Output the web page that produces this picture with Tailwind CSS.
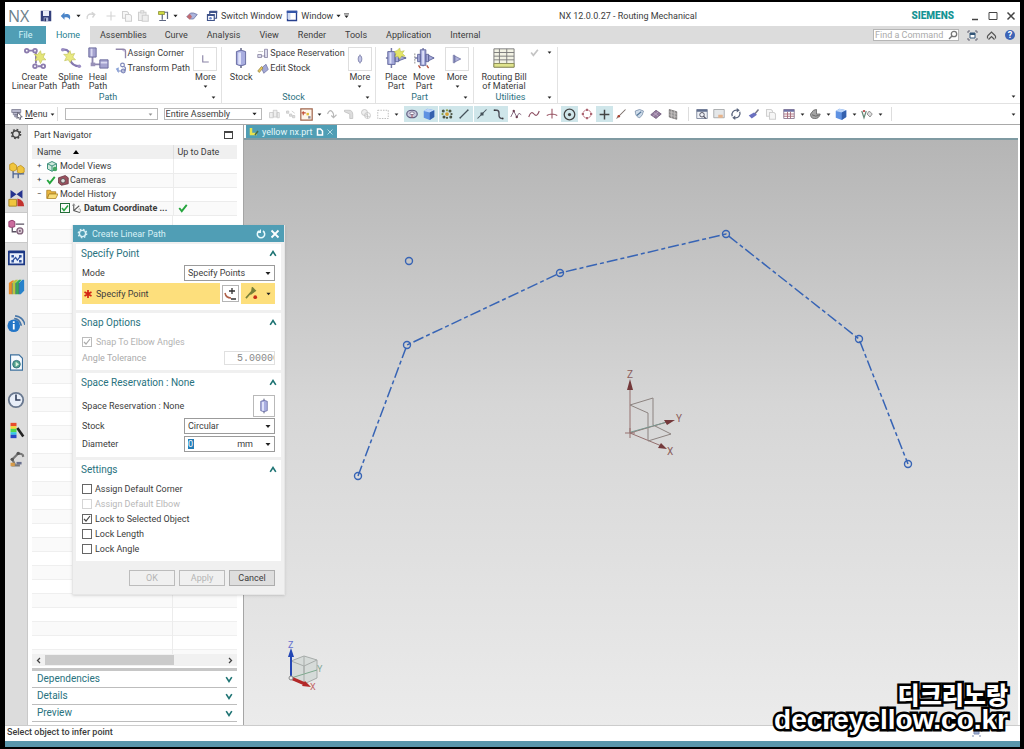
<!DOCTYPE html>
<html lang="en">
<head>
<meta charset="utf-8">
<title>NX 12.0.0.27 - Routing Mechanical</title>
<script src="https://cdn.jsdelivr.net/npm/@tailwindcss/browser@4"></script>
</head>
<body class="bg-black font-[Roboto,'Noto_Sans',sans-serif] text-[9px] leading-[12px] text-[#3c3c3c]">
<svg class="hidden" aria-hidden="true">
  <symbol id="caret" viewBox="0 0 6 4"><path d="M0.5 0.5h5L3 3.5z" fill="#222"/></symbol>
  <symbol id="up" viewBox="0 0 10 8"><path d="M1.5 7 5 1.5 8.5 7" fill="none" stroke="#1f7474" stroke-width="2"/></symbol>
  <symbol id="down" viewBox="0 0 10 8"><path d="M1.5 1 5 6.500 8.500 1" fill="none" stroke="#1f7474" stroke-width="2"/></symbol>
  <symbol id="gear" viewBox="0 0 16 16"><g fill="none" stroke="currentColor"><circle cx="8" cy="8" r="4.500" stroke-width="2"/><circle cx="8" cy="8" r="6" stroke-width="2.200" stroke-dasharray="2.300 2.410"/></g></symbol>
  <symbol id="save" viewBox="0 0 16 16"><path d="M1 1h14v14H1z" fill="#34407c"/><path d="M4 1h8v7H4z" fill="#e9edf8"/><path d="M5 10h6v5H5z" fill="#aeb8da"/><path d="M6 11h2v4H6z" fill="#28315f"/></symbol>
  <symbol id="undo" viewBox="0 0 16 16"><path d="M1 8l5-5v3c6-2 9 1 7 7-1-3-3-4-7-3v3z" fill="#4b85c8"/></symbol>
  <symbol id="redo" viewBox="0 0 16 16"><path d="M3 12C2 7 5 4 12 6M9 3l4 3-3 4" fill="none" stroke="#d4d4d4" stroke-width="1.800"/></symbol>
  <symbol id="plusg" viewBox="0 0 16 16"><path d="M8 2v12M2 8h12" stroke="#d4d4d4" stroke-width="1.500"/></symbol>
  <symbol id="copyg" viewBox="0 0 16 16"><g fill="#f6f6f6" stroke="#cfcfcf" stroke-width="1.400"><path d="M2 2h6l2 2v7H2z"/><path d="M6 6h6l2 2v7H6z"/></g></symbol>
  <symbol id="pasteg" viewBox="0 0 16 16"><g fill="#eee" stroke="#cfcfcf" stroke-width="1.400"><path d="M2 3h10v11H2z"/><path d="M5 1h4v3H5zM7 7h8v8H7z"/></g></symbol>
  <symbol id="cmd" viewBox="0 0 16 16"><path d="M2 2h8v4H2z" fill="#ccd840" stroke="#888c30"/><path d="M7 6v7M3 14h9M10 3h4v9" fill="none" stroke="#5c6680" stroke-width="1.600"/></symbol>
  <symbol id="eraser" viewBox="0 0 16 16"><path d="M1 9l5-5h4l5 2-5 6H6z" fill="#aab4dc" stroke="#656fa0"/><path d="M1 9l4-4 3 4-3 4z" fill="#c06c72"/></symbol>
  <symbol id="switch" viewBox="0 0 16 16"><g fill="#fff" stroke="#40548a" stroke-width="1.600"><path d="M5 2h9v9H5z"/><path d="M2 6h9v8H2z"/></g><path d="M5 1h10v3H5zM2 6h9v2H2z" fill="#40548a"/><circle cx="6" cy="11" r="1.800" fill="#6a86c9"/></symbol>
  <symbol id="win" viewBox="0 0 16 16"><path d="M2 2h12v12H2z" fill="#fff" stroke="#263f8e" stroke-width="1.800"/><path d="M1 1h14v3H1z" fill="#3456a8"/><path d="M2 4h4v8H2z" fill="#cfdcf5"/></symbol>

  <symbol id="linpath" viewBox="0 0 24 24"><g fill="none" stroke="#8c7cae" stroke-width="2"><path d="M5 4h6M13 6v12M15 21h4"/><circle cx="3" cy="4" r="2"/><circle cx="12" cy="4" r="2"/><circle cx="12" cy="21" r="2"/><circle cx="21" cy="21" r="2"/></g><path d="m18 4 1 4 4-1-2 4 3 3-4 0-2 4-2-4-4 1 2-4-3-3 4 0z" fill="#e4e578" stroke="#b9bb4e" stroke-width=".6"/></symbol>
  <symbol id="spline" viewBox="0 0 24 24"><path d="M3 3c8-1 7 5 8 10s5 8 11 8" fill="none" stroke="#8478b0" stroke-width="2.400"/><circle cx="3" cy="3" r="2" fill="#9c8fc5"/><circle cx="21" cy="21" r="2" fill="#9c8fc5"/><path d="m11 4 1 4 4-1-2 4 3 3-4 0-2 3-2-3-4 1 2-4-3-3 4 0z" fill="#e9e981" stroke="#b9bb4e" stroke-width=".6"/></symbol>
  <symbol id="heal" viewBox="0 0 24 24"><path d="M6 10v9h9" fill="none" stroke="#8f88b0" stroke-width="2"/><path d="M2 1h8v10H2z" fill="#a5a3d0" stroke="#68679a"/><path d="M14 14h9v9h-9z" fill="#a5a3d0" stroke="#68679a"/><path d="M4 2h2v8H4zM15 16h7v2h-7z" fill="#d9d8f0"/><path d="M4 17h5v4H4z" fill="#9891b8"/></symbol>
  <symbol id="acorner" viewBox="0 0 16 16"><path d="M1 3h10q3 0 3 3v9" fill="none" stroke="#9085aa" stroke-width="1.800"/><path d="M9 4h4v3z" fill="#c3b9db"/></symbol>
  <symbol id="tpath" viewBox="0 0 16 16"><g fill="none" stroke="#7f88bb" stroke-width="1.600"><path d="M3 12h8a3 3 0 0 0 0-6H8"/><circle cx="10" cy="4" r="2.500"/><circle cx="11" cy="12" r="2.500"/></g><path d="M1 9l4-2v8z" fill="#8aa3d8"/></symbol>
  <symbol id="ell" viewBox="0 0 16 16"><path d="M5 3v9h8" fill="none" stroke="#8a83a6" stroke-width="1.500"/></symbol>
  <symbol id="stock" viewBox="0 0 24 24"><path d="M12 1v22" stroke="#555a7a" stroke-width="1.500"/><path d="M7 5q5-3 10 0v14q-5 3-10 0z" fill="#a9aee0" stroke="#62679c"/><path d="M9 6h3v13H9z" fill="#dfe2fa"/></symbol>
  <symbol id="ovl" viewBox="0 0 16 16"><path d="M8 2v12" stroke="#666a90"/><ellipse cx="8" cy="8" rx="2.500" ry="4.500" fill="#c3c6e8" stroke="#70749f"/></symbol>
  <symbol id="space" viewBox="0 0 16 16"><path d="M1 10h5v4H1zM6 12h5M10 3h4v11h-4z" fill="#dcdcec" stroke="#807b9c"/><path d="M2 6h6" stroke="#999" stroke-dasharray="1.500 1"/></symbol>
  <symbol id="estock" viewBox="0 0 16 16"><path d="M6 8l6-5 3 7-6 5z" fill="#a3a8d4" stroke="#7377a5"/><path d="M1 12l5-6 2 2-5 6z" fill="#e7c75c" stroke="#94803d"/></symbol>
  <symbol id="place" viewBox="0 0 24 24"><path d="M7 1v22M1 12h22" stroke="#777ba8" stroke-width="1.600"/><path d="M3 5h8v14H3zM11 8h4v8h-4zM15 9l8 3-8 3z" fill="#a5a9da" stroke="#63689c"/><path d="M5 6h2v12H5z" fill="#dcdff7"/><path d="m16 1 1 4 4-1-2 3 3 3-4 0-2 3-2-3-3 1 1-4-2-2 3-1z" fill="#e4e566" stroke="#abb044" stroke-width=".5"/></symbol>
  <symbol id="move" viewBox="0 0 24 24"><path d="M11 1v20M2 12h21" stroke="#777ba8" stroke-width="1.600"/><path d="M8 3h6v17H8zM14 8h3v8h-3zM17 9l6 3-6 3zM5 8h3v8H5z" fill="#a5a9da" stroke="#63689c"/><path d="M10 4h2v15h-2z" fill="#dcdff7"/><path d="M2 7v12" stroke="#888" stroke-dasharray="2 1"/><path d="M6 20l2 3M15 20l2 3" stroke="#b4503c" stroke-width="1.500"/></symbol>
  <symbol id="cone" viewBox="0 0 16 16"><path d="M3 3h2v10H3zM5 4l8 4-8 4z" fill="#b0b3dc" stroke="#6c70a0"/></symbol>
  <symbol id="bom" viewBox="0 0 24 24"><path d="M1 2h22v20H1z" fill="#f2f2e4" stroke="#777"/><path d="M1 6h22M1 10h22M1 14h22M1 18h22M7 2v20M15 2v20" stroke="#777"/><path d="M1 18h22v4H1z" fill="#dfe38c" stroke="#8d8f55"/></symbol>
  <symbol id="chk" viewBox="0 0 16 16"><path d="M2 8l4 5 8-10" fill="none" stroke="currentColor" stroke-width="3"/></symbol>

  <symbol id="menu" viewBox="0 0 16 16"><path d="M1 2h12v4H1zM3 6h9v3H3zM5 9h5v3H5z" fill="#b8b8cc" stroke="#78788e"/><path d="M9 6l6 6-3 0 1 3-2 0-1-3-2 2z" fill="#fff" stroke="#445"/></symbol>
  <symbol id="g1" viewBox="0 0 16 16"><path d="M2 6h5v7H2zM7 3h5v9H7zM12 6h3v7h-3z" fill="#eee" stroke="#c6c6c6"/></symbol>
  <symbol id="g2" viewBox="0 0 16 16"><path d="M2 4h3v3H2zM6 8h3v3H6zM10 10h3v3h-3zM9 4l4 3" fill="#ddd" stroke="#c6c6c6"/></symbol>
  <symbol id="snapbox" viewBox="0 0 16 16"><path d="M1 1h14v14H1z" fill="#fff5ea" stroke="#a0664e" stroke-width="1.500"/><path d="M4 4v5M2 6h5" stroke="#c04830" stroke-width="1.300"/><path d="M8 6h3v3H8z" fill="#e4bf3a"/><path d="M10 10h3v3h-3z" fill="#8a8a9a"/></symbol>
  <symbol id="g3" viewBox="0 0 16 16"><path d="M2 8q4-9 8 0v4M7 10l3 3 4-4" fill="none" stroke="#b9b9b9" stroke-width="1.500"/></symbol>
  <symbol id="g4" viewBox="0 0 16 16"><path d="M2 3h6q5 0 5 6v5H9V8L2 5z" fill="#ddd" stroke="#bdbdbd"/></symbol>
  <symbol id="g5" viewBox="0 0 16 16"><circle cx="6" cy="6" r="4" fill="#eee" stroke="#bdbdbd"/><circle cx="10" cy="10" r="4" fill="none" stroke="#bdbdbd"/><path d="M10 8v6M7 11h6" stroke="#bbb"/></symbol>
  <symbol id="g6" viewBox="0 0 16 16"><path d="M1 3h14v11H1z" fill="none" stroke="#aaa" stroke-dasharray="2 1.500"/></symbol>
  <symbol id="torus" viewBox="0 0 16 16"><ellipse cx="8" cy="8" rx="7" ry="5" fill="#c9c9dc" stroke="#5f5c80" stroke-width="1.600"/><ellipse cx="8" cy="7" rx="3" ry="1.800" fill="#fff" stroke="#665a7c"/><path d="M8 9v4" stroke="#a33"/></symbol>
  <symbol id="cube" viewBox="0 0 16 16"><path d="M1 4l5-3 9 2v9l-6 4-8-3z" fill="#5f92e2"/><path d="M1 4l5-3 9 2-6 3z" fill="#bcd6fa"/><path d="M9 6l6-3v9l-6 4z" fill="#3461ae"/></symbol>
  <symbol id="pts" viewBox="0 0 16 16"><g fill="#4b5445"><circle cx="3" cy="4" r="2"/><circle cx="12" cy="4" r="2"/><circle cx="4" cy="12" r="2"/><circle cx="13" cy="12" r="2"/><circle cx="8" cy="8" r="2.500" fill="#d4a030"/><circle cx="2" cy="8" r="1.500" fill="#8b9a42"/><circle cx="14" cy="8" r="1.500"/><circle cx="8" cy="3" r="1.500" fill="#8b9a42"/><circle cx="8" cy="13" r="1.500"/></g></symbol>
  <symbol id="line" viewBox="0 0 16 16"><path d="M3 13 13 3" stroke="#45525a" stroke-width="1.600"/><path d="M2 12h2v2H2zM12 2h2v2h-2z" fill="#45525a"/></symbol>
  <symbol id="linem" viewBox="0 0 16 16"><path d="M2 14 14 2" stroke="#45525a" stroke-width="1.400"/><path d="M6 6h4v4H6z" fill="#45525a"/></symbol>
  <symbol id="ess" viewBox="0 0 16 16"><path d="M2 3h3q3 0 3 4v3q0 4 5 4" fill="none" stroke="#4a4a55" stroke-width="1.800"/><path d="M1 2h2v2H1zM12 13h2v2h-2z" fill="#333"/></symbol>
  <symbol id="zig" viewBox="0 0 16 16"><path d="M1 12 5 4l4 8 3-5 3 2" fill="none" stroke="#8a6f86" stroke-width="1.300"/><g fill="#6d3f55"><circle cx="5" cy="4" r="1.600"/><circle cx="9" cy="12" r="1.600"/></g></symbol>
  <symbol id="wave" viewBox="0 0 16 16"><path d="M1 12q3-9 7-4t7-4" fill="none" stroke="#8c4d60" stroke-width="1.500"/></symbol>
  <symbol id="cross" viewBox="0 0 16 16"><path d="M8 1v13M1 10q7-4 14 0" fill="none" stroke="#96505f" stroke-width="1.400"/></symbol>
  <symbol id="target" viewBox="0 0 16 16"><circle cx="8" cy="8" r="6.500" fill="none" stroke="#444" stroke-width="1.600"/><circle cx="8" cy="8" r="2" fill="#444"/></symbol>
  <symbol id="quad" viewBox="0 0 16 16"><circle cx="8" cy="8" r="5.500" fill="none" stroke="#bd7884" stroke-width="1.200"/><path d="M7 1h2v3H7zM7 12h2v3H7zM1 7h3v2H1zM12 7h3v2h-3z" fill="#9a4a58"/></symbol>
  <symbol id="plus" viewBox="0 0 16 16"><path d="M8 2v12M2 8h12" stroke="#444" stroke-width="1.800"/></symbol>
  <symbol id="slash" viewBox="0 0 16 16"><path d="M2 14 14 2" stroke="#776b66" stroke-width="1.400"/><circle cx="5" cy="11" r="1.700" fill="#a43"/></symbol>
  <symbol id="face" viewBox="0 0 16 16"><path d="M3 4q6-4 11 0-1 6-5 9-6-1-6-9z" fill="#cfdcea" stroke="#7389a6"/><path d="M5 10l6-5" stroke="#579" stroke-width="1.500"/></symbol>
  <symbol id="dia" viewBox="0 0 16 16"><path d="M1 9l7-6 7 5-7 6z" fill="#927a9c" stroke="#675273"/><path d="M5 6l6 5M11 5l-7 6" stroke="#c9b5cf"/></symbol>
  <symbol id="mesh" viewBox="0 0 16 16"><path d="M3 2l10 3v10L3 12z" fill="#999" stroke="#6b6767"/><path d="M3 5l10 3M3 9l10 3M6 3v10M10 4v10" stroke="#c3bebe"/></symbol>
  <symbol id="fit" viewBox="0 0 16 16"><path d="M1 2h14v12H1z" fill="#eef1f6" stroke="#667089"/><path d="M1 2h14v3H1z" fill="#606e8e"/><circle cx="8" cy="9" r="3" fill="none" stroke="#556" stroke-width="1.300"/><path d="M10 11l3 3" stroke="#556" stroke-width="1.500"/></symbol>
  <symbol id="zoomw" viewBox="0 0 16 16"><path d="M1 2h14v11H1z" fill="#e4e7e9" stroke="#969a9c"/><path d="M7 9h6v4H7z" fill="#e6b38b"/></symbol>
  <symbol id="rot" viewBox="0 0 16 16"><path d="M3 11a6 6 0 0 1 7-8M13 5a6 6 0 0 1-7 8" fill="none" stroke="#59647c" stroke-width="1.700"/><path d="M9 0l4 3-4 3zM7 10l-4 3 4 3z" fill="#59647c"/></symbol>
  <symbol id="brush" viewBox="0 0 16 16"><path d="M9 8l5-6" stroke="#778" stroke-width="2"/><path d="M1 10l7-4 4 3-7 5z" fill="#6a70c0"/></symbol>
  <symbol id="tbl" viewBox="0 0 16 16"><path d="M1 2h14v12H1z" fill="#fff" stroke="#75607e"/><path d="M1 2h14v3H1z" fill="#6c70a4"/><path d="M1 8h14M1 11h14M6 5v9M10 5v9" stroke="#a66a78" stroke-width="1.200"/></symbol>
  <symbol id="shade" viewBox="0 0 16 16"><path d="M2 8q4-7 8-6v6h5q-2 7-8 6-5 0-5-6z" fill="#a4a4a4" stroke="#5c5c5c"/><path d="M4 9q5 3 9 1" fill="none" stroke="#555"/></symbol>
  <symbol id="vis" viewBox="0 0 16 16"><path d="M1 4l3 9 3-9" fill="none" stroke="#687" stroke-width="1.600"/><path d="M8 8l3-4 4 4-3 4z" fill="#ddd" stroke="#777"/><circle cx="4" cy="4" r="1.500" fill="#b44"/></symbol>

  <symbol id="assy" viewBox="0 0 20 20"><path d="M2 3l4-2 4 3v5l-4 2-4-2zM11 6l4-2 4 3v5l-4 2-4-2z" fill="#f0c53e" stroke="#c09320"/><path d="M6 11v8M6 14h13M12 14v5" fill="none" stroke="#49608e" stroke-width="1.500"/></symbol>
  <symbol id="cons" viewBox="0 0 20 20"><path d="M3 0v10l7-5zM17 0v10l-7-5z" fill="#25338f"/><path d="M1 11h9v8H1z" fill="#f0c53e" stroke="#a17e20"/><path d="M11 19v-9q8 2 8 9z" fill="#c3322e"/></symbol>
  <symbol id="pnav" viewBox="0 0 20 20"><path d="M1 3q4-3 7 0v6q-4 2-7 0z" fill="#cb6c9e" stroke="#8d3567"/><path d="M9 6h10M5 10v5h5" fill="none" stroke="#5a5262" stroke-width="1.500"/><circle cx="14" cy="14" r="3.500" fill="#d9c9d5" stroke="#80627a" stroke-width="1.500"/><circle cx="14" cy="14" r="1" fill="#60405a"/></symbol>
  <symbol id="reuse" viewBox="0 0 20 20"><path d="M1 3h18v15H1z" fill="#e8effa" stroke="#1b3784" stroke-width="2"/><path d="M1 2h18v3H1z" fill="#1b3784"/><path d="M4 7h3v3H4zM13 7h3v3h-3zM4 13h3v3H4zM13 13h3v3h-3z" fill="#2f519e"/><path d="M6 13l3-3 2 3 4-5" fill="none" stroke="#2f519e" stroke-width="1.500"/></symbol>
  <symbol id="books" viewBox="0 0 20 20"><path d="M1 6l4-3h3L5 6v13H1z" fill="#e88a28"/><path d="M5 6l4-4h3L9 6v13H5z" fill="#b3c940"/><path d="M9 6l4-4h3l-3 4v13H9z" fill="#34a95a"/><path d="M13 6l4-4h2v13l-4 4h-2z" fill="#2882ca"/><path d="M5 6v13M9 6v13M13 6v13" stroke="#557" stroke-width=".7"/></symbol>
  <symbol id="info" viewBox="0 0 20 20"><circle cx="7.500" cy="12" r="7" fill="#2476c7"/><path d="M6.500 10h2v6h-2zM6.500 7h2v2h-2z" fill="#fff"/><path d="M8 4q6 0 8 8M9 1q9 1 11 10" fill="none" stroke="#4776a8" stroke-width="1.800"/></symbol>
  <symbol id="html" viewBox="0 0 20 20"><path d="M3 1h10l4 4v14H3z" fill="#f7fbff" stroke="#3c6f9c" stroke-width="1.300"/><circle cx="10" cy="12" r="4.500" fill="#53a28e" stroke="#2a6876"/><path d="M9 9l4 3-4 3z" fill="#dff3df"/></symbol>
  <symbol id="clock" viewBox="0 0 20 20"><circle cx="10" cy="10" r="8" fill="#e8eef8" stroke="#69788f" stroke-width="2"/><path d="M10 4v6h5" fill="none" stroke="#33405c" stroke-width="1.800"/></symbol>
  <symbol id="rainbow" viewBox="0 0 20 20"><path d="M3 1h7v4H3z" fill="#e84b2c"/><path d="M3 5h7v3H3z" fill="#f5dd32"/><path d="M3 8h7v4H3z" fill="#4fd64f"/><path d="M3 12h7v3H3z" fill="#31c5e8"/><path d="M3 15h7v4H3z" fill="#2745c6"/><path d="M11 7l7 10" stroke="#222" stroke-width="3"/></symbol>
  <symbol id="robot" viewBox="0 0 20 20"><path d="M4 18h10M8 17l-3-6 7-7 5 1M17 5l1 3" fill="none" stroke="#777" stroke-width="2.600"/><circle cx="5" cy="11" r="2" fill="#555"/><circle cx="12" cy="4" r="2" fill="#555"/><path d="M3 15h5v4H3z" fill="#d69a48"/><path d="M10 14h6v3h-6z" fill="#69708e"/></symbol>

  <symbol id="views" viewBox="0 0 16 16"><path d="M2 5l6-3 6 3v7l-6 3-6-3z" fill="#cfe9dc" stroke="#3b8f79" stroke-width="1.300"/><path d="M2 5l6 3 6-3M8 8v7" fill="none" stroke="#3b8f79" stroke-width="1.300"/><circle cx="12" cy="12" r="3" fill="#45a865"/></symbol>
  <symbol id="cam" viewBox="0 0 16 16"><path d="M2 5l9-3 4 3v8l-9 2-4-3z" fill="#9b5260" stroke="#63323e"/><circle cx="8" cy="9" r="3" fill="#ddd" stroke="#444"/></symbol>
  <symbol id="folder" viewBox="0 0 16 16"><path d="M1 3h5l1 2h6v3H4l-2 6H1z" fill="#e9b640" stroke="#a77d20"/><path d="M4 8h12l-3 6H2z" fill="#f8dd78" stroke="#a77d20"/></symbol>
  <symbol id="csys" viewBox="0 0 16 16"><path d="M4 2v9l9 3M4 11l8-7" fill="none" stroke="#555" stroke-width="1.500"/><path d="M2 4l2-3 2 3M11 9q4-2 2 5" fill="none" stroke="#777"/></symbol>
</svg>

<div class="flex h-screen flex-col overflow-hidden border-t-2 border-r-4 border-b-2 border-l-[5px] border-black bg-white">
  <!-- Title bar -->
  <header class="grid h-6 shrink-0 grid-cols-[12fr_auto_7fr] items-center pt-1">
    <div class="flex items-center gap-2 pl-[3px] whitespace-nowrap">
      <span class="w-6 font-['Open_Sans',sans-serif] text-[16px] leading-4 text-[#6d818b]">NX</span>
      <button aria-label="Save"><svg class="size-3"><use href="#save"/></svg></button>
      <button aria-label="Undo" class="flex items-center gap-1"><svg class="size-3"><use href="#undo"/></svg><svg class="h-1 w-[5px]"><use href="#caret"/></svg></button>
      <button aria-label="Redo" class="-ml-1"><svg class="size-3"><use href="#redo"/></svg></button>
      <button aria-label="Cut"><svg class="size-3"><use href="#plusg"/></svg></button>
      <button aria-label="Copy" class="-ml-1"><svg class="size-3"><use href="#copyg"/></svg></button>
      <button aria-label="Paste" class="-ml-1"><svg class="size-3"><use href="#pasteg"/></svg></button>
      <button aria-label="Repeat command" class="flex items-center gap-1"><svg class="size-3"><use href="#cmd"/></svg><svg class="h-1 w-[5px]"><use href="#caret"/></svg></button>
      <button aria-label="Touch mode"><svg class="size-3"><use href="#eraser"/></svg></button>
      <button class="flex items-center gap-[3px]"><svg class="size-3"><use href="#switch"/></svg>Switch Window</button>
      <button class="-ml-1 flex items-center gap-[3px]"><svg class="size-3"><use href="#win"/></svg>Window <svg class="h-1 w-[5px]"><use href="#caret"/></svg><svg class="h-[6px] w-[5px]" viewBox="0 0 6 6"><path d="M0 .5h6" stroke="#222"/><path d="M.5 2.500h5L3 5.500z" fill="#222"/></svg></button>
    </div>
    <h1>NX 12.0.0.27 - Routing Mechanical</h1>
    <div class="flex items-center justify-end gap-2 pr-1">
      <span class="mr-2 text-[10px] font-black text-[#159494]">SIEMENS</span>
      <button aria-label="Minimize"><svg class="size-[10px]" viewBox="0 0 10 10"><path d="M2 8.500h6" stroke="#444" stroke-width="1.500"/></svg></button>
      <button aria-label="Maximize"><svg class="size-[10px]" viewBox="0 0 10 10"><path d="M1 1.500h8v7H1z" fill="none" stroke="#444"/></svg></button>
      <button aria-label="Close"><svg class="size-[10px]" viewBox="0 0 10 10"><path d="M1.500 1.500l7 7M8.500 1.500l-7 7" stroke="#444" stroke-width="1.500"/></svg></button>
    </div>
  </header>

  <!-- Ribbon tabs -->
  <nav class="flex h-[18px] shrink-0 items-stretch bg-[#dcdcdc]">
    <button class="w-[41px] bg-[#509eb5] text-[#d5f3f7]">File</button>
    <button class="w-11 bg-white text-[#25808f]">Home</button>
    <button class="ml-[10px]">Assemblies</button>
    <button class="ml-[18px]">Curve</button>
    <button class="ml-[19px]">Analysis</button>
    <button class="ml-[19px]">View</button>
    <button class="ml-[19px]">Render</button>
    <button class="ml-[19px]">Tools</button>
    <button class="ml-[19px]">Application</button>
    <button class="ml-[19px]">Internal</button>
    <div class="ml-auto flex items-center gap-2 pr-[5px]">
      <label class="flex h-3 w-[86px] items-center border border-[#b5b5b5] bg-white">
        <input aria-label="Find a Command" placeholder="Find a Command" class="w-full min-w-0 pl-px placeholder:text-[#aaa]">
        <svg class="size-[10px] shrink-0" viewBox="0 0 10 10"><circle cx="6" cy="4" r="2.700" fill="#fff" stroke="#777" stroke-width="1.300"/><path d="M4 6 1 9" stroke="#777" stroke-width="1.500"/></svg>
      </label>
      <button aria-label="Full screen"><svg class="size-[11px]" viewBox="0 0 11 11"><path d="M1 3V1h2M8 1h2v2M10 8v2H8M3 10H1V8" fill="none" stroke="#667"/><path d="M3 3h5v5H3z" fill="#fff" stroke="#357"/><path d="M3 3h5v2H3z" fill="#357"/></svg></button>
      <button aria-label="Minimize ribbon"><svg class="size-[11px]" viewBox="0 0 11 11"><path d="M1.500 6l4-4 4 4M2.500 9.500l3-3 3 3M1.500 6v2.500M9.500 6v2.500" fill="none" stroke="#555" stroke-width="1.200"/></svg></button>
      <button aria-label="Help" class="size-[10px] rounded-full bg-[#3c63b6] text-[9px] leading-[10px] font-bold text-white">?</button>
    </div>
  </nav>

  <!-- Ribbon -->
  <section class="flex h-[60px] shrink-0 border-b border-[#e2e2e2] text-center leading-[9px]">
    <div class="mt-[3px] flex w-[217px] flex-col border-r border-[#e2e2e2]">
      <div class="flex flex-1 items-start pl-2">
        <button class="flex w-[43px] flex-col items-center gap-1 whitespace-nowrap"><svg class="size-[22px]"><use href="#linpath"/></svg>Create<br>Linear Path</button>
        <button class="flex w-[30px] flex-col items-center gap-1"><svg class="size-[22px]"><use href="#spline"/></svg>Spline<br>Path</button>
        <button class="flex w-[26px] flex-col items-center gap-1"><svg class="size-[22px]"><use href="#heal"/></svg>Heal<br>Path</button>
        <div class="flex flex-1 flex-col gap-[3px] pl-1 whitespace-nowrap">
          <button class="flex items-center gap-px"><svg class="size-3"><use href="#acorner"/></svg>Assign Corner</button>
          <button class="flex items-center gap-px"><svg class="size-3"><use href="#tpath"/></svg>Transform Path</button>
        </div>
        <button class="flex w-8 flex-col items-center"><span class="mb-[2px] flex size-6 items-center justify-center border border-[#dedede]"><svg class="size-3"><use href="#ell"/></svg></span>More<svg class="mt-[3px] h-[3px] w-[5px]"><use href="#caret"/></svg></button>
      </div>
      <div class="flex h-3 items-center text-[#2d7180]"><span class="flex-1">Path</span><svg class="mr-[5px] h-[3px] w-[5px]"><use href="#caret"/></svg></div>
    </div>
    <div class="mt-[3px] flex w-[154px] flex-col border-r border-[#e2e2e2]">
      <div class="flex flex-1 items-start pl-1">
        <button class="flex w-8 flex-col items-center gap-1"><svg class="size-[22px]"><use href="#stock"/></svg>Stock</button>
        <div class="flex flex-1 flex-col gap-[3px] pl-px whitespace-nowrap">
          <button class="flex items-center gap-px"><svg class="size-3"><use href="#space"/></svg>Space Reservation</button>
          <button class="flex items-center gap-px"><svg class="size-3"><use href="#estock"/></svg>Edit Stock</button>
        </div>
        <button class="flex w-8 flex-col items-center"><span class="mb-[2px] flex size-6 items-center justify-center border border-[#dedede]"><svg class="size-3"><use href="#ovl"/></svg></span>More<svg class="mt-[3px] h-[3px] w-[5px]"><use href="#caret"/></svg></button>
      </div>
      <div class="flex h-3 items-center text-[#2d7180]"><span class="flex-1">Stock</span><svg class="mr-[5px] h-[3px] w-[5px]"><use href="#caret"/></svg></div>
    </div>
    <div class="mt-[3px] flex w-[98px] flex-col border-r border-[#e2e2e2]">
      <div class="flex flex-1 items-start pl-[6px]">
        <button class="flex w-7 flex-col items-center gap-1"><svg class="size-[22px]"><use href="#place"/></svg>Place<br>Part</button>
        <button class="flex w-7 flex-col items-center gap-1"><svg class="size-[22px]"><use href="#move"/></svg>Move<br>Part</button>
        <button class="ml-auto flex w-8 flex-col items-center"><span class="mb-[2px] flex size-6 items-center justify-center border border-[#dedede]"><svg class="size-3"><use href="#cone"/></svg></span>More<svg class="mt-[3px] h-[3px] w-[5px]"><use href="#caret"/></svg></button>
      </div>
      <div class="flex h-3 items-center text-[#2d7180]"><span class="flex-1">Part</span><svg class="mr-[5px] h-[3px] w-[5px]"><use href="#caret"/></svg></div>
    </div>
    <div class="mt-[3px] flex w-[84px] flex-col border-r border-[#e2e2e2]">
      <div class="flex flex-1 items-start pl-[5px]">
        <button class="flex w-[50px] flex-col items-center gap-1 whitespace-nowrap"><svg class="size-[22px]"><use href="#bom"/></svg>Routing Bill<br>of Material</button>
        <button aria-label="Check" class="flex items-center gap-2 pt-px pl-px text-[#c4c4c4]"><svg class="size-[9px]"><use href="#chk"/></svg><svg class="h-[3px] w-[5px]"><use href="#caret"/></svg></button>
      </div>
      <div class="flex h-3 items-center text-[#2d7180]"><span class="flex-1">Utilities</span><svg class="mr-[5px] h-[3px] w-[5px]"><use href="#caret"/></svg></div>
    </div>
    <svg class="mr-1 mb-[5px] ml-auto h-[3px] w-[5px] self-end"><use href="#caret"/></svg>
  </section>

  <!-- Selection bar -->
  <section class="flex h-[21px] shrink-0 items-center border-b border-[#a9a9a9]">
    <button class="ml-[6px] flex items-center gap-[2px]"><svg class="size-3"><use href="#menu"/></svg><span><u>M</u>enu</span><svg class="h-[3px] w-[5px]"><use href="#caret"/></svg></button>
    <span class="ml-[2px] h-[14px] w-2 border-l border-[#ddd]"></span>
    <div class="relative flex h-3 w-[93px] shrink-0 items-center border border-[#b9b9b9]">
      <select aria-label="Type filter" class="h-full w-full appearance-none"><option></option></select><svg class="absolute right-1 h-[3px] w-[5px] opacity-50"><use href="#caret"/></svg>
    </div>
    <div class="relative ml-[6px] flex h-3 w-[98px] shrink-0 items-center border border-[#b9b9b9]">
      <select aria-label="Selection scope" class="h-full w-full appearance-none pl-px leading-[10px]"><option>Entire Assembly</option></select><svg class="absolute right-1 h-1 w-[5px]"><use href="#caret"/></svg>
    </div>
    <div class="ml-1 flex items-center">
      <button aria-label="Filter" class="flex w-[17px] justify-center"><svg class="size-3"><use href="#g1"/></svg></button>
      <button aria-label="Reset" class="flex w-[17px] justify-center"><svg class="size-3"><use href="#g2"/></svg></button>
      <button aria-label="Snap menu" class="flex w-[22px] items-center justify-between"><svg class="size-[13px]"><use href="#snapbox"/></svg><svg class="h-[3px] w-[5px]"><use href="#caret"/></svg></button>
      <button aria-label="Chain" class="ml-[2px] flex w-[17px] justify-center"><svg class="size-3"><use href="#g3"/></svg></button>
      <button aria-label="Follow" class="flex w-[17px] justify-center"><svg class="size-3"><use href="#g4"/></svg></button>
      <button aria-label="Group" class="flex w-[17px] justify-center"><svg class="size-3"><use href="#g5"/></svg></button>
      <button aria-label="Rectangle select" class="ml-[2px] flex w-6 items-center justify-between pr-[2px]"><svg class="size-3"><use href="#g6"/></svg><svg class="h-[3px] w-[5px]"><use href="#caret"/></svg></button>
      <div class="ml-[3px] flex h-4 items-center bg-[#cfe6ea]">
        <button aria-label="Shaded" class="flex w-[17px] justify-center"><svg class="size-3"><use href="#torus"/></svg></button>
        <button aria-label="Solid" class="flex w-[17px] justify-center"><svg class="size-3"><use href="#cube"/></svg></button>
      </div>
      <div class="ml-px flex h-4 items-center bg-[#cfe6ea]">
        <button aria-label="Snap points" class="flex w-[17px] justify-center"><svg class="size-3"><use href="#pts"/></svg></button>
        <button aria-label="End point" class="flex w-[17px] justify-center"><svg class="size-3"><use href="#line"/></svg></button>
      </div>
      <div class="ml-px flex h-4 items-center bg-[#cfe6ea]">
        <button aria-label="Mid point" class="flex w-[17px] justify-center"><svg class="size-3"><use href="#linem"/></svg></button>
        <button aria-label="Control point" class="flex w-[17px] justify-center"><svg class="size-3"><use href="#ess"/></svg></button>
      </div>
      <div class="flex items-center">
        <button aria-label="Defining point" class="flex w-[17px] justify-center"><svg class="size-3"><use href="#zig"/></svg></button>
        <button aria-label="Pole" class="flex w-[18px] justify-center"><svg class="size-3"><use href="#wave"/></svg></button>
        <button aria-label="Intersection" class="flex w-[18px] justify-center"><svg class="size-3"><use href="#cross"/></svg></button>
        <button aria-label="Arc center" class="flex h-4 w-[17px] items-center justify-center bg-[#cfe6ea]"><svg class="size-[13px]"><use href="#target"/></svg></button>
        <button aria-label="Quadrant" class="flex w-[18px] justify-center"><svg class="size-3"><use href="#quad"/></svg></button>
        <button aria-label="Existing point" class="flex h-4 w-[17px] items-center justify-center bg-[#cfe6ea]"><svg class="size-[13px]"><use href="#plus"/></svg></button>
        <button aria-label="Point on curve" class="flex w-[17px] justify-center"><svg class="size-3"><use href="#slash"/></svg></button>
        <button aria-label="Point on face" class="flex w-[18px] justify-center"><svg class="size-3"><use href="#face"/></svg></button>
        <button aria-label="Facet" class="flex w-[17px] justify-center"><svg class="size-3"><use href="#dia"/></svg></button>
        <button aria-label="Grid" class="flex w-[17px] justify-center"><svg class="size-3"><use href="#mesh"/></svg></button>
      </div>
      <span class="mr-1 ml-[6px] h-[14px] border-l border-[#ddd]"></span>
      <button aria-label="Fit" class="flex w-[18px] justify-center"><svg class="size-3"><use href="#fit"/></svg></button>
      <button aria-label="Zoom" class="flex w-[17px] justify-center"><svg class="size-3"><use href="#zoomw"/></svg></button>
      <button aria-label="Rotate" class="flex w-[17px] justify-center"><svg class="size-3"><use href="#rot"/></svg></button>
      <button aria-label="Style" class="flex w-[18px] justify-center"><svg class="size-3"><use href="#brush"/></svg></button>
      <button aria-label="Copy display" class="flex w-[17px] justify-center"><svg class="size-3"><use href="#copyg"/></svg></button>
      <button aria-label="Layers" class="ml-[3px] flex w-[26px] items-center justify-between pr-1"><svg class="size-3"><use href="#tbl"/></svg><svg class="h-[3px] w-[5px]"><use href="#caret"/></svg></button>
      <button aria-label="Rendering" class="flex w-[26px] items-center justify-between pr-1"><svg class="size-3"><use href="#shade"/></svg><svg class="h-[3px] w-[5px]"><use href="#caret"/></svg></button>
      <button aria-label="Orientation" class="flex w-[26px] items-center justify-between pr-1"><svg class="size-3"><use href="#cube"/></svg><svg class="h-[3px] w-[5px]"><use href="#caret"/></svg></button>
      <button aria-label="Visibility" class="flex w-[26px] items-center justify-between pr-1"><svg class="size-3"><use href="#vis"/></svg><svg class="h-[3px] w-[5px]"><use href="#caret"/></svg></button>
      <span class="ml-1 h-[14px] border-l border-[#ddd]"></span>
    </div>
    <svg class="mr-1 ml-auto h-[3px] w-[5px]"><use href="#caret"/></svg>
  </section>

  <main class="flex min-h-0 flex-1">
    <!-- Resource bar -->
    <nav class="flex w-[23px] shrink-0 flex-col items-center border-r border-[#c9c9c9] bg-[#dcdcdc] text-[#444]">
      <button aria-label="Options" class="mt-[3px] mb-4"><svg class="size-3"><use href="#gear"/></svg></button>
      <button aria-label="Assembly Navigator" class="flex h-7 items-center"><svg class="size-[17px]"><use href="#assy"/></svg></button>
      <button aria-label="Constraint Navigator" class="flex h-7 items-center"><svg class="size-[17px]"><use href="#cons"/></svg></button>
      <button aria-label="Part Navigator" class="flex h-[31px] w-full items-center justify-center border-y border-[#c9c9c9] bg-white"><svg class="size-[17px]"><use href="#pnav"/></svg></button>
      <button aria-label="Reuse Library" class="flex h-7 items-center"><svg class="size-[17px]"><use href="#reuse"/></svg></button>
      <button aria-label="HD3D Tools" class="flex h-[30px] items-center"><svg class="size-[17px]"><use href="#books"/></svg></button>
      <button aria-label="Web Browser" class="flex h-[46px] items-center"><svg class="size-[18px]"><use href="#info"/></svg></button>
      <button aria-label="History" class="flex h-[30px] items-center"><svg class="size-[17px]"><use href="#html"/></svg></button>
      <button aria-label="Recent" class="flex h-[45px] items-center"><svg class="size-[18px]"><use href="#clock"/></svg></button>
      <button aria-label="Roles" class="flex h-4 items-center"><svg class="size-[17px]"><use href="#rainbow"/></svg></button>
      <button aria-label="System Scenes" class="flex h-10 items-center"><svg class="size-[17px]"><use href="#robot"/></svg></button>
    </nav>

    <!-- Part Navigator -->
    <aside class="flex w-[216px] shrink-0 flex-col border-r border-[#a5a5a5] pr-[6px] pl-1">
      <div class="flex h-5 items-center justify-between pr-1 pl-[2px]"><h2>Part Navigator</h2><button aria-label="Float panel" class="h-2 w-[9px] border border-t-2 border-[#444]"></button></div>
      <table class="w-full table-fixed border-collapse text-left">
        <thead><tr class="h-[14px] bg-[#f0f0f0]"><th class="w-[141px] border-r border-[#e0e0e0] pl-[5px] font-normal"><span class="flex items-center gap-3">Name <svg class="h-1 w-[6px]" viewBox="0 0 6 4"><path d="M0 4h6L3 0z" fill="#000"/></svg></span></th><th class="pl-1 font-normal">Up to Date</th></tr></thead>
        <tbody class="[&_td]:border-[#ececec] [&_tr]:h-[14px]">
          <tr><td class="border-r border-b"><span class="flex items-center gap-[2px] pl-[5px]"><span class="w-[7px] text-[8px]">+</span><svg class="size-3"><use href="#views"/></svg>Model Views</span></td><td class="border-b"></td></tr>
          <tr class="bg-[#fafafa]"><td class="border-r border-b"><span class="flex items-center gap-px pl-[5px]"><span class="w-[8px] text-[8px]">+</span><svg class="size-[10px] text-[#25a53d]"><use href="#chk"/></svg><svg class="size-3"><use href="#cam"/></svg>Cameras</span></td><td class="border-b"></td></tr>
          <tr><td class="border-r border-b"><span class="flex items-center gap-[2px] pl-[5px]"><span class="w-[7px] text-[8px]">−</span><svg class="size-3"><use href="#folder"/></svg>Model History</span></td><td class="border-b"></td></tr>
          <tr class="bg-[#fafafa]"><td class="border-r border-b"><span class="flex items-center gap-px pl-7 font-bold whitespace-nowrap"><span class="flex size-[10px] items-center justify-center border border-[#236e39]"><svg class="size-2 text-[#25a53d]"><use href="#chk"/></svg></span><svg class="size-[11px]"><use href="#csys"/></svg><span class="pl-px">Datum Coordinate ...</span></span></td><td class="border-b pl-1"><svg class="size-[10px] text-[#25a53d]"><use href="#chk"/></svg></td></tr>
        </tbody>
      </table>
      <div class="flex min-h-0 flex-1 bg-[repeating-linear-gradient(#fff_0px_13px,#efefef_13px_14px,#fafafa_14px_27px,#efefef_27px_28px)]"><div class="w-[141px] border-r border-[#ececec]"></div></div>
      <div class="flex h-3 shrink-0 items-center gap-1 bg-[#f1f1f1] px-1">
        <svg class="h-[7px] w-[5px]" viewBox="0 0 5 7"><path d="M4 1 1.500 3.500 4 6" fill="none" stroke="#444" stroke-width="1.300"/></svg>
        <div class="h-[10px] w-[129px] bg-[#cbcbcb]"></div>
        <svg class="ml-auto h-[7px] w-[5px]" viewBox="0 0 5 7"><path d="M1 1 3.500 3.500 1 6" fill="none" stroke="#444" stroke-width="1.300"/></svg>
      </div>
      <div class="mt-[2px] h-[3px] shrink-0 bg-[#c6c6c6]"></div>
      <div class="mb-[3px] shrink-0 text-[10px] text-[#28727e]">
        <button class="flex h-[17px] w-full items-center justify-between border-b border-[#bdbdbd] pr-1 pl-[5px]">Dependencies<svg class="h-[7px] w-2"><use href="#down"/></svg></button>
        <button class="flex h-[17px] w-full items-center justify-between border-b border-[#bdbdbd] pr-1 pl-[5px]">Details<svg class="h-[7px] w-2"><use href="#down"/></svg></button>
        <button class="flex h-[17px] w-full items-center justify-between border-b border-[#bdbdbd] pr-1 pl-[5px]">Preview<svg class="h-[7px] w-2"><use href="#down"/></svg></button>
      </div>
    </aside>

    <!-- Graphics window -->
    <section class="flex min-w-0 flex-1 flex-col">
      <div class="flex h-[13px] shrink-0 pl-[2px]">
        <button class="flex w-[91px] items-center gap-[3px] bg-[#509eb5] pl-[3px] whitespace-nowrap text-[#e3f7fa]"><svg class="size-[10px]" viewBox="0 0 10 10"><path d="M2 1v6h6" fill="none" stroke="#e8e350" stroke-width="2.500"/><path d="M6 8l3-4" stroke="#476a45" stroke-width="1.500"/></svg>yellow nx.prt<svg class="size-2" viewBox="0 0 8 8"><path d="M1.500 1h3l2 2v4h-5z" fill="none" stroke="#fff" stroke-width="1.500"/></svg><svg class="size-[6px]" viewBox="0 0 6 6"><path d="M.5.5l5 5M5.500.5l-5 5" stroke="#b5dbe4"/></svg></button>
      </div>
      <div class="relative mr-[2px] min-h-0 flex-1 overflow-hidden border-t-2 border-[#7f9aa2] bg-linear-to-b from-[#b5b5b5] via-[#d6d6d6] via-45% to-[#ebebeb]">
        <svg class="absolute inset-0 size-full" aria-label="Routing path model">
          <g fill="none" stroke="#3764b5" stroke-width="1.500">
            <path d="M114 336 163 205 316 133 482 94 615 199 664 324" stroke-dasharray="11 3 4 3"/>
            <g stroke-width="1.400"><circle cx="165" cy="121" r="3.500"/><circle cx="114" cy="336" r="3.500"/><circle cx="163" cy="205" r="3.500"/><circle cx="316" cy="133" r="3.500"/><circle cx="482" cy="94" r="3.500"/><circle cx="615" cy="199" r="3.500"/><circle cx="664" cy="324" r="3.500"/></g>
          </g>
          <g fill="none" stroke="#95706f">
            <path d="M386 293V245M381 293h10M386 288v10M386 293l34 14M386 293l37-11"/>
            <path d="M386 265l18 8v27M386 265l23-7v27l18 9-23 7" stroke="#8c8380"/>
            <path d="M387 292 423 282" stroke="#789890"/>
          </g>
          <g fill="#74393b"><path d="M386 239l-3 11h6zM431 280l-11 0 3 5zM423 309l-9-1 3-5z"/></g>
          <g fill="#8b5d5b" font-family="Roboto, sans-serif" font-size="10"><text x="383" y="238">Z</text><text x="432" y="282">Y</text><text x="423" y="315">X</text></g>
          <g><path d="M47 521l13-5 13 4v18l-13 6-13-5z" fill="#d6dbd9" stroke="#a7acaa"/><path d="M47 521l13 5 13-6M60 526v18M60 516v17" fill="none" stroke="#a7acaa"/>
            <path d="M47 538 73 530" stroke="#7fa98f"/>
            <path d="M47 538V516" stroke="#2447b5" stroke-width="2"/><path d="M47 508l-3 9h6z" fill="#2447b5"/>
            <path d="M47 538l14 6" stroke="#b32828" stroke-width="3"/><path d="M67 547l-9-1 3-5z" fill="#b32828"/><circle cx="47" cy="538" r="2" fill="#eee" stroke="#888"/></g>
          <g font-family="Roboto, sans-serif" font-size="9"><text x="44" y="508" fill="#6570cf">Z</text><text x="73" y="532" fill="#84a797">Y</text><text x="66" y="550" fill="#c26464">X</text></g>
        </svg>
      </div>
    </section>
  </main>

  <footer class="flex h-4 shrink-0 items-center justify-between border-t border-[#ccc] pr-[38px] pb-[3px] pl-[2px] font-medium">Select object to infer point<svg class="size-[11px]" viewBox="0 0 11 11"><path d="M2 10V8M9 10V8M3 2h5v5H3z" fill="#9eb0d5" stroke="#7d8cb4"/></svg></footer>
  <div class="h-[6px] shrink-0 bg-[#5996ab]"></div>
</div>

<!-- Create Linear Path window -->
<form class="absolute top-[225px] left-[72px] w-[213px] border border-t-0 border-[#e6e6e6] bg-[#f0f0f0] shadow-sm">
  <div class="flex h-[17px] items-center gap-1 bg-[#509eb5] px-1 text-[#d9f1f6]"><svg class="size-[11px]"><use href="#gear"/></svg><h2 class="flex-1">Create Linear Path</h2>
    <button type="button" aria-label="Reset"><svg class="size-[10px]" viewBox="0 0 10 10"><path d="M3 2a3.700 3.700 0 1 0 4 0" fill="none" stroke="#e7fafd" stroke-width="1.500"/><path d="M5 0v4H1z" fill="#e7fafd"/></svg></button>
    <button type="button" aria-label="Close dialog"><svg class="size-[10px]" viewBox="0 0 10 10"><path d="M1.500 1.500l7 7M8.500 1.500l-7 7" stroke="#fff" stroke-width="1.800"/></svg></button></div>
  <div class="mx-[3px] mt-[2px] flex flex-col gap-[3px]">
    <section class="h-[66px] bg-white pr-1 pl-[5px]">
      <div class="flex h-[19px] items-center justify-between text-[10px] text-[#28727e]"><h3>Specify Point</h3><svg class="h-[7px] w-2"><use href="#up"/></svg></div>
      <div class="mt-[2px] mr-[2px] flex h-4 items-center justify-between pl-px"><label for="mode">Mode</label><div class="relative flex h-4 w-[91px] items-center border border-[#9b9b9b]"><select id="mode" class="h-full w-full appearance-none pl-[3px]"><option>Specify Points</option></select><svg class="absolute right-[3px] h-[5px] w-[6px]"><use href="#caret"/></svg></div></div>
      <div class="mt-[2px] mr-[2px] ml-px flex h-[21px] items-center bg-[#fddf7c]"><svg class="mx-px size-[10px]" viewBox="0 0 10 10"><path d="M5 1v8M1.500 3l7 4M8.500 3l-7 4" stroke="#d22316" stroke-width="1.700"/></svg><span class="flex-1 pl-[2px]">Specify Point</span>
        <div class="flex h-full items-center bg-white px-[2px]"><button type="button" aria-label="Point dialog" class="flex size-[17px] items-center justify-center border border-[#b5b5b5]"><svg class="size-[14px]" viewBox="0 0 14 14"><path d="M8 1v6M5 4h6" stroke="#333" stroke-width="1.300"/><path d="M1 6q1 5 6 5" fill="none" stroke="#b06048" stroke-width="1.500"/><path d="M7 12h5" stroke="#333" stroke-width="1.500"/></svg></button></div>
        <button type="button" aria-label="Inferred point" class="flex items-center gap-2 px-1"><svg class="size-[13px]" viewBox="0 0 14 14"><path d="M1 12 8 4M8 1l3 3-4 3z" fill="#798138" stroke="#798138" stroke-width="1.700"/><circle cx="11" cy="11" r="2" fill="#c72d19"/></svg><svg class="h-1 w-[5px]"><use href="#caret"/></svg></button></div>
    </section>
    <section class="h-[57px] bg-white pr-1 pl-[5px]">
      <div class="flex h-[19px] items-center justify-between text-[10px] text-[#28727e]"><h3>Snap Options</h3><svg class="h-[7px] w-2"><use href="#up"/></svg></div>
      <div class="flex h-[19px] items-center gap-1 pl-px text-[#b2b2b2]"><span class="relative flex size-[10px]"><input id="snap" type="checkbox" checked disabled class="size-[10px] appearance-none border border-[#bcbcbc]"><svg class="pointer-events-none absolute inset-px size-2" viewBox="0 0 8 8"><path d="M1 4l2 2 4-5" fill="none" stroke="#aaa" stroke-width="1.200"/></svg></span><label for="snap">Snap To Elbow Angles</label></div>
      <div class="mr-[2px] flex h-[14px] items-center justify-between pl-px text-[#aaa]"><label for="tol">Angle Tolerance</label><input id="tol" disabled value="5.00000" class="h-[14px] w-[51px] border border-[#e0e0e0] pl-3 font-['Liberation_Mono',monospace] text-[10px] text-[#888]"></div>
    </section>
    <section class="h-[84px] bg-white pr-1 pl-[5px]">
      <div class="flex h-[19px] items-center justify-between text-[10px] text-[#28727e]"><h3>Space Reservation : None</h3><svg class="h-[7px] w-2"><use href="#up"/></svg></div>
      <div class="mt-[2px] mr-[2px] flex h-[23px] items-center justify-between pl-px"><span>Space Reservation : None</span><button type="button" aria-label="Space Reservation" class="flex size-[22px] items-center justify-center border border-[#b9b9b9]"><svg class="size-4"><use href="#stock"/></svg></button></div>
      <div class="mt-px mr-[2px] flex h-4 items-center justify-between pl-px"><label for="stk">Stock</label><div class="relative flex h-4 w-[91px] items-center border border-[#9b9b9b]"><select id="stk" class="h-full w-full appearance-none pl-[3px]"><option>Circular</option></select><svg class="absolute right-[3px] h-[5px] w-[6px]"><use href="#caret"/></svg></div></div>
      <div class="mt-[2px] mr-[2px] flex h-4 items-center justify-between pl-px"><label for="dia-in">Diameter</label><div class="flex h-4 w-[91px] items-center border border-[#9b9b9b] pr-[3px] pl-[3px]"><input id="dia-in" value="0" class="h-[10px] w-[6px] bg-[#237cb6] text-white"><span class="ml-auto">mm</span><svg class="ml-3 h-[5px] w-[6px]"><use href="#caret"/></svg></div></div>
    </section>
    <section class="h-[101px] bg-white pr-1 pl-[5px]">
      <div class="flex h-[19px] items-center justify-between text-[10px] text-[#28727e]"><h3>Settings</h3><svg class="h-[7px] w-2"><use href="#up"/></svg></div>
      <div class="mt-[2px] grid auto-rows-[15px] pl-px [&>div]:flex [&>div]:items-center [&>div]:gap-[3px]">
        <div><input id="c1" type="checkbox" class="size-[10px] appearance-none border border-[#666]"><label for="c1">Assign Default Corner</label></div>
        <div class="text-[#b8b8b8]"><input id="c2" type="checkbox" disabled class="size-[10px] appearance-none border border-[#d5d5d5]"><label for="c2">Assign Default Elbow</label></div>
        <div><span class="relative flex size-[10px]"><input id="c3" type="checkbox" checked class="size-[10px] appearance-none border border-[#666]"><svg class="pointer-events-none absolute inset-px size-2" viewBox="0 0 8 8"><path d="M1 4l2 2 4-5" fill="none" stroke="#444" stroke-width="1.200"/></svg></span><label for="c3">Lock to Selected Object</label></div>
        <div><input id="c4" type="checkbox" class="size-[10px] appearance-none border border-[#666]"><label for="c4">Lock Length</label></div>
        <div><input id="c5" type="checkbox" class="size-[10px] appearance-none border border-[#666]"><label for="c5">Lock Angle</label></div>
      </div>
    </section>
  </div>
  <div class="flex h-[33px] items-center justify-end gap-1 pr-[9px]">
    <button type="button" disabled class="h-4 w-[46px] border border-[#bcbcbc] text-[#b5b5b5]">OK</button>
    <button type="button" disabled class="h-4 w-[46px] border border-[#bcbcbc] text-[#b5b5b5]">Apply</button>
    <button type="button" class="h-4 w-[46px] border border-[#adadad] bg-[#dedede]">Cancel</button>
  </div>
</form>

<div class="pointer-events-none absolute right-4 bottom-4 text-right leading-[26px] text-white [-webkit-text-stroke:5px_#000] [paint-order:stroke_fill]">
  <p lang="ko" class="font-['Noto_Sans_CJK_KR',sans-serif] text-[24px] font-black">디크리노랑</p>
  <p class="font-['Liberation_Sans',sans-serif] text-[28px] font-bold">decreyellow.co.kr</p>
</div>
</body>
</html>
